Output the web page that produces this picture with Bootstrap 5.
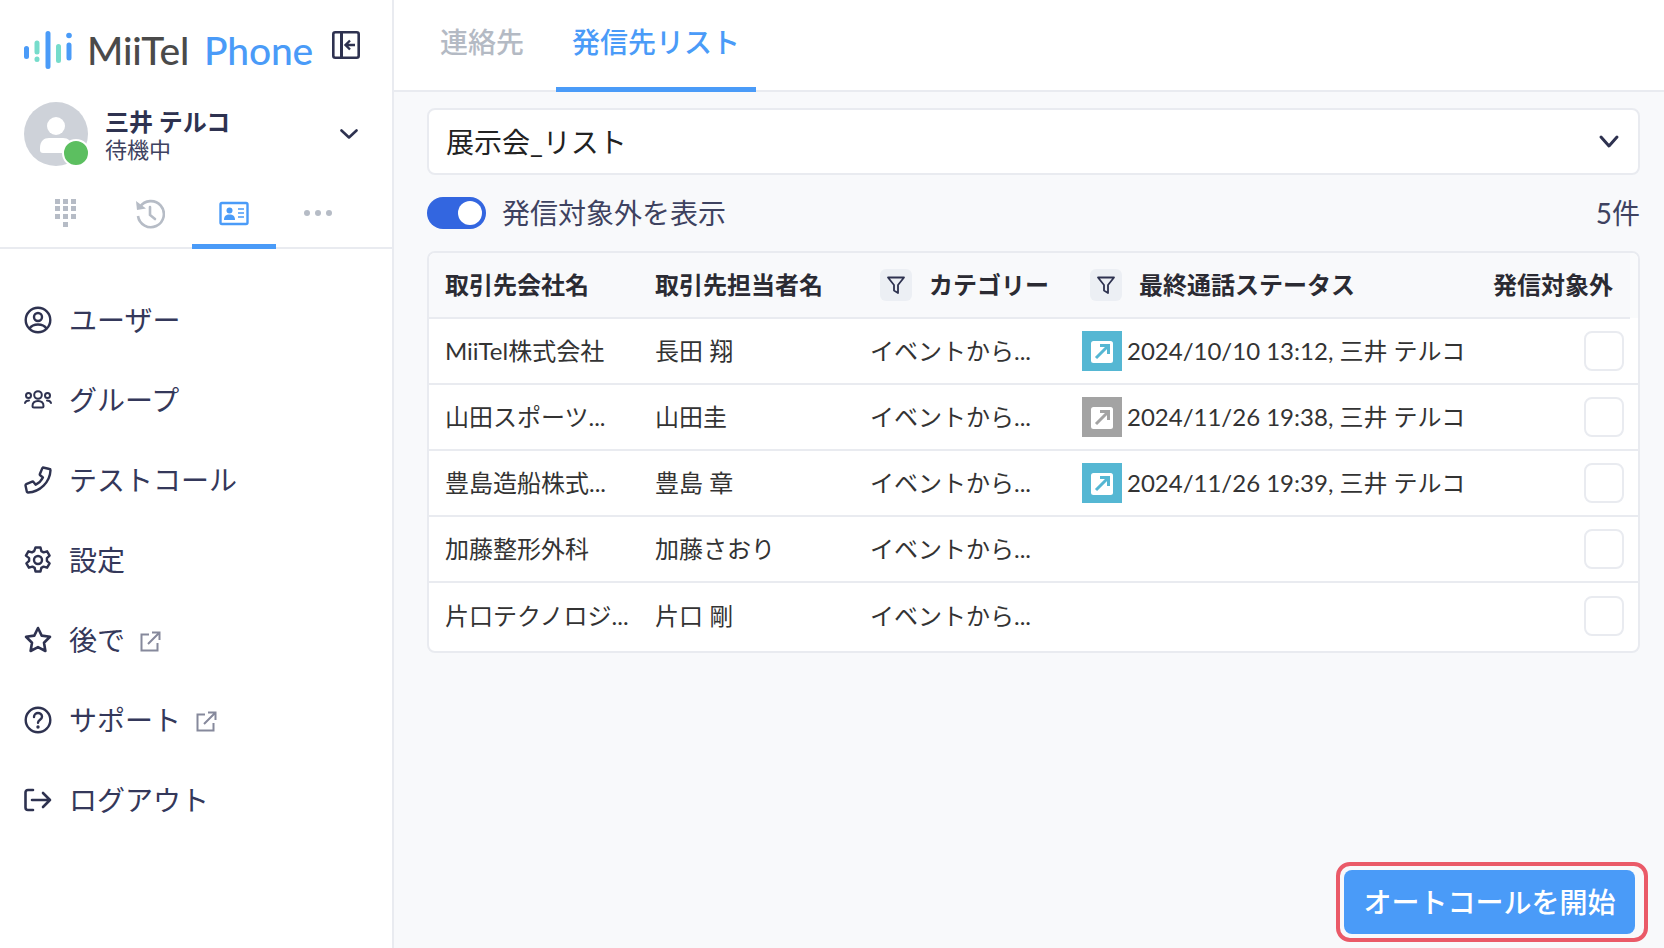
<!DOCTYPE html>
<html lang="ja">
<head>
<meta charset="utf-8">
<title>MiiTel Phone</title>
<link href="https://cdn.jsdelivr.net/npm/bootstrap@5.3.0/dist/css/bootstrap.min.css" rel="stylesheet">
<style>
html,body{height:100%;overflow:hidden}
body{font-family:Lato,"Noto Sans CJK JP",sans-serif;color:#2e3250;background:#fff}
.shell{height:948px}
.side{width:394px;flex:none;border-right:2px solid #e9ebf0;background:#fff}
.brandrow{height:102px;padding:31px 32px 0 24px}
.brandmark{width:48px;height:38px;flex:none}
.brandname{font-family:Lato,sans-serif;font-size:39px;line-height:38px;font-weight:500;margin-left:15px;letter-spacing:-.2px;white-space:nowrap}
.brand-a{color:#4a4a4a}
.brand-b{color:#4a9bf8;margin-left:15px}
.collapse-ic{width:28px;height:28px;margin-left:auto}
.userrow{padding:0 34px 0 24px;height:64px}
.avatarbox{width:64px;height:64px;border-radius:50%;background:#ced2d9;flex:none;position:relative}
.statusdot{position:absolute;right:-2px;bottom:-1px;width:28px;height:28px;border-radius:50%;background:#5cbf60;border:2px solid #fff}
.username{font-size:24px;line-height:30px;font-weight:700;color:#2e3250;white-space:nowrap}
.userstate{font-size:22px;line-height:26px;color:#3e4260;white-space:nowrap}
.usertext{margin-left:17px;margin-top:2px}
.chev{width:18px;height:10px;margin-left:auto}
.icontabs{padding:0 24px;height:83px;margin-top:0;border-bottom:2px solid #e9ebf0}
.icontab{width:84px;height:81px;padding-top:33px;text-align:center;border-bottom:5px solid transparent;margin-bottom:-2px;height:83px}
.icontab.on{border-bottom-color:#4a9bf8}
.icontab svg{display:block;margin:0 auto}
.menulist{padding-top:31px}
.menuitem{height:80px;padding-left:24px;color:#34385a;font-size:28px;text-decoration:none;gap:17px}
.menuitem>svg:first-child{width:28px;height:28px;flex:none}
.extlink{width:21px;height:21px;margin-left:-2px;margin-top:2px;flex:none}
.pane{background:#f8f9fb;min-width:0}
.tabbar{height:92px;background:#fff;border-bottom:2px solid #e9ebf0;padding-left:16px}
.tabitem{height:90px;padding:0 16px;font-size:28px;font-weight:500;line-height:85px;color:#b4bac4;text-decoration:none;white-space:nowrap;margin-bottom:-2px;border-bottom:5px solid transparent;height:92px}
.tabitem.first{padding:0 16px 0 30px;margin-right:16px}
.tabitem.on{color:#4a9bf8;border-bottom-color:#4a9bf8}
.panebody{padding:16px 24px 0 33px}
.listpick.form-select{height:67px;border:2px solid #e9ebf0;border-radius:8px;font-size:28px;color:#222;padding:0 60px 0 17px;background-position:right 16px center;background-size:26px 20px;background-image:url("data:image/svg+xml,%3csvg xmlns='http://www.w3.org/2000/svg' viewBox='0 0 26 20'%3e%3cpath fill='none' stroke='%232e3250' stroke-linecap='round' stroke-linejoin='round' stroke-width='3' d='M5 5l8 9 8-9'/%3e%3c/svg%3e")}
.togglerow{height:76px}
.togglebox.form-check{padding:0;margin:0;min-height:0}
.togglebox .form-check-input{width:59px;height:32px;margin:0;float:none;background-color:#3366e0;border:0;box-shadow:none}
.togglelabel{font-size:28px;color:#3e4260;margin-left:16px;line-height:32px}
.countlabel{font-size:28px;color:#3e4260;margin-left:auto}
.gridwrap{border:2px solid #e9ebf0;border-radius:8px;background:#fff;overflow:hidden;height:402px}
.gridtable.table{table-layout:fixed;width:100%;margin:0;font-size:24px;color:#333;--bs-table-bg:transparent;border-color:#e9ebf0}
.gridtable th,.gridtable td{padding:0 0 0 16px;vertical-align:middle;white-space:nowrap;border-bottom:2px solid #e9ebf0;box-shadow:none}
.gridtable thead tr{height:65px}
.gridtable tbody tr{height:66px}
.gridtable tbody tr:last-child td{border-bottom:0;height:66px}
.gridtable th{background:#f8f9fb;font-weight:700;color:#2b2b33;font-size:24px}
.gridtable th.spacer{background:#fafbfc;border-bottom:0;padding:0}
.gridtable th.endhead{text-align:right;padding-right:17px}
.gridtable td.endcell{text-align:right;padding-right:14px}
.filterbtn{width:32px;height:32px;border-radius:6px;background:#eceff4;flex:none}
.filtercell{margin-left:10px;gap:17px}
.filtercell.wide{margin-left:8px;gap:17px}
.statusic{width:40px;height:40px;flex:none;margin-right:5px}
.mark-blue{background:#55b7d3}
.mark-grey{background:#a3a3a3}
.tick{display:inline-block;width:40px;height:40px;border:2px solid #e9ebf0;border-radius:8px;background:#fff;vertical-align:middle}
.bottombar{position:absolute;right:16px;bottom:6px;border:4px solid #ea5a68;border-radius:14px;padding:4px 9px 4px 4px}
.autocall.btn{width:291px;height:64px;background:#4a9bf8;border:0;border-radius:8px;font-size:28px;font-weight:500;color:#fff;padding:0;white-space:nowrap}
.pane{position:relative}
</style>
</head>
<body>
<div class="shell d-flex">
  <aside class="side d-flex flex-column">
    <div class="brandrow d-flex align-items-start">
      <svg class="brandmark" viewBox="0 0 48 38" fill="none" stroke-linecap="round" stroke-width="5">
        <path stroke="#4a9bf8" d="M2.5 17.5v8M24 2.5v33M45 14v13"/>
        <path stroke="#76dccb" d="M13 12v9M13 28v.5M34.500 15.500v14"/>
        <circle cx="45" cy="4.500" r="2.800" fill="#4a9bf8"/>
      </svg>
      <div class="brandname"><span class="brand-a">MiiTel</span><span class="brand-b">Phone</span></div>
      <svg class="collapse-ic" viewBox="0 0 28 28" fill="none" stroke="#2e3250" stroke-width="2.600"><rect x="1.300" y="1.300" width="25.400" height="25.400" rx="2"/><path d="M9.500 1.300v25.400" stroke-width="3"/><path d="M23 14h-9M18 9.500L13.500 14l4.500 4.500" stroke-width="2.400"/></svg>
    </div>
    <div class="userrow d-flex align-items-center">
      <div class="avatarbox">
        <svg width="64" height="64" viewBox="0 0 64 64" fill="#fff"><circle cx="32" cy="24" r="9"/><path d="M16 46c0-7 4-10 9-10h14c5 0 9 3 9 10v2c0 2-1 3-3 3H19c-2 0-3-1-3-3z"/></svg>
        <span class="statusdot"></span>
      </div>
      <div class="usertext"><div class="username">三井 テルコ</div><div class="userstate">待機中</div></div>
      <svg class="chev" viewBox="0 0 18 10" fill="none" stroke="#2e3250" stroke-width="2.600" stroke-linecap="round" stroke-linejoin="round"><path d="M1.500 1.500L9 8.500l7.500-7"/></svg>
    </div>
    <div class="icontabs d-flex">
      <div class="icontab">
        <svg width="24" height="30" viewBox="0 0 24 30" fill="#b6bcc6"><rect x="1" y="0" width="5" height="5"/><rect x="9" y="0" width="5" height="5"/><rect x="17" y="0" width="5" height="5"/><rect x="1" y="7" width="5" height="5"/><rect x="9" y="7" width="5" height="5"/><rect x="17" y="7" width="5" height="5"/><rect x="1" y="15" width="5" height="5"/><rect x="9" y="15" width="5" height="5"/><rect x="17" y="15" width="5" height="5"/><rect x="9" y="23" width="5" height="5"/></svg>
      </div>
      <div class="icontab">
        <svg width="30" height="30" viewBox="0 0 30 30" fill="none" stroke="#b6bcc6" stroke-width="2.600"><path d="M5 8A13 13 0 1 1 3 17"/><path d="M1 2l1 9 9-1.500z" fill="#b6bcc6" stroke="none"/><path d="M15 8v8l5 4" stroke-linecap="round"/></svg>
      </div>
      <div class="icontab on">
        <svg width="30" height="30" viewBox="0 0 30 30" fill="none"><rect x="1.500" y="4" width="27" height="21" rx="1.500" stroke="#4a9bf8" stroke-width="2.400"/><circle cx="10.500" cy="11.500" r="3" fill="#4a9bf8"/><path d="M5 21c0-4 2-5.500 5.500-5.500S16 17 16 21z" fill="#4a9bf8"/><path d="M19 10h6M19 14h6M19 18h6" stroke="#4a9bf8" stroke-width="1.600"/></svg>
      </div>
      <div class="icontab">
        <svg width="30" height="30" viewBox="0 0 30 30" fill="#b6bcc6"><circle cx="4" cy="14" r="3"/><circle cx="15" cy="14" r="3"/><circle cx="26" cy="14" r="3"/></svg>
      </div>
    </div>
    <nav class="menulist nav flex-column">
      <a class="menuitem d-flex align-items-center" href="#">
        <svg viewBox="0 0 28 28" fill="none" stroke="#2e3250" stroke-width="2.400"><circle cx="14" cy="14" r="12.300"/><circle cx="14" cy="11" r="4"/><path d="M5.500 22.500c2-3 5-4 8.500-4s6.500 1 8.500 4"/></svg>
        <span>ユーザー</span>
      </a>
      <a class="menuitem d-flex align-items-center" href="#">
        <svg viewBox="0 0 28 28" fill="none" stroke="#2e3250" stroke-width="2"><circle cx="14" cy="9" r="3.800"/><circle cx="4.500" cy="9.500" r="2.500"/><circle cx="23.500" cy="9.500" r="2.500"/><path d="M8.500 20c0-4 2-5 5.500-5s5.500 1 5.500 5c0 1-.5 1.500-1.500 1.500H10c-1 0-1.500-.5-1.500-1.500z"/><path d="M1 17c.5-1.500 2-2.500 4-2.500M27 17c-.5-1.500-2-2.500-4-2.500" stroke-linecap="round"/></svg>
        <span>グループ</span>
      </a>
      <a class="menuitem d-flex align-items-center" href="#">
        <svg viewBox="0 0 28 28" fill="none" stroke="#2e3250" stroke-width="2.400" stroke-linejoin="round"><path d="M19 1.500l6.500 1.500c.5 0 1 .5 1 1.200C26 16 16 26 4 26.500c-.7 0-1.200-.5-1.200-1L1.500 19.500c0-.5 0-1 .7-1.300l6-2.500c.5-.2 1-.1 1.300.3l2.200 2.700c3.500-1.700 5.500-3.700 7.200-7.200l-2.700-2.200c-.4-.3-.5-.8-.3-1.300l2.500-6c.3-.5.8-.7 1.300-.5z"/></svg>
        <span>テストコール</span>
      </a>
      <a class="menuitem d-flex align-items-center" href="#">
        <svg viewBox="0 0 28 28" fill="none" stroke="#2e3250" stroke-width="2.400" stroke-linejoin="round"><circle cx="14" cy="14" r="4"/><path d="M11.500 1.500h5l.8 3.600 2.300 1.300 3.500-1.100 2.500 4.300-2.700 2.500v2.800l2.700 2.500-2.500 4.300-3.500-1.100-2.300 1.300-.8 3.600h-5l-.8-3.600-2.300-1.300-3.500 1.100-2.500-4.300 2.700-2.500v-2.800L1.900 9.600l2.500-4.300 3.500 1.100 2.300-1.300z"/></svg>
        <span>設定</span>
      </a>
      <a class="menuitem d-flex align-items-center" href="#">
        <svg viewBox="0 0 28 28" fill="none" stroke="#2e3250" stroke-width="2.600" stroke-linejoin="round"><path d="M14 2l3.700 7.600 8.300 1.200-6 5.900 1.400 8.300-7.400-3.900-7.400 3.900L8 16.700l-6-5.900 8.300-1.200z"/></svg>
        <span>後で</span>
        <svg class="extlink" viewBox="0 0 21 21" fill="none" stroke="#86899c" stroke-width="2"><path d="M9 3.500H1.500v16h16V12"/><path d="M8 13L19 2M12 1.500h7.500V9"/></svg>
      </a>
      <a class="menuitem d-flex align-items-center" href="#">
        <svg viewBox="0 0 28 28" fill="none" stroke="#2e3250" stroke-width="2.400"><circle cx="14" cy="14" r="12.300"/><path d="M10 11c0-2.500 2-4 4-4s4 1.500 4 3.700c0 3-4 3-4 6" stroke-linecap="round"/><circle cx="14" cy="21" r="1.700" fill="#2e3250" stroke="none"/></svg>
        <span>サポート</span>
        <svg class="extlink" viewBox="0 0 21 21" fill="none" stroke="#86899c" stroke-width="2"><path d="M9 3.500H1.500v16h16V12"/><path d="M8 13L19 2M12 1.500h7.500V9"/></svg>
      </a>
      <a class="menuitem d-flex align-items-center" href="#">
        <svg viewBox="0 0 28 28" fill="none" stroke="#2e3250" stroke-width="2.600" stroke-linecap="round" stroke-linejoin="round"><path d="M9 4H4C2.500 4 1.500 5 1.500 6.500v15C1.500 23 2.500 24 4 24h5"/><path d="M8 14h18M19 7l7 7-7 7"/></svg>
        <span>ログアウト</span>
      </a>
    </nav>
  </aside>
  <main class="pane flex-grow-1 d-flex flex-column">
    <div class="tabbar d-flex">
      <a class="tabitem first" href="#">連絡先</a>
      <a class="tabitem on" href="#">発信先リスト</a>
    </div>
    <div class="panebody">
      <select class="listpick form-select"><option>展示会_リスト</option></select>
      <div class="togglerow d-flex align-items-center">
        <div class="togglebox form-check form-switch d-flex align-items-center">
          <input class="form-check-input" type="checkbox" role="switch" id="sw" checked>
          <label class="togglelabel" for="sw">発信対象外を表示</label>
        </div>
        <span class="countlabel">5件</span>
      </div>
      <div class="gridwrap">
        <table class="gridtable table">
          <colgroup><col style="width:210px"><col style="width:215px"><col style="width:212px"><col style="width:404px"><col style="width:160px"><col style="width:8px"></colgroup>
          <thead>
            <tr>
              <th>取引先会社名</th>
              <th>取引先担当者名</th>
              <th><div class="filtercell d-flex align-items-center"><span class="filterbtn d-flex align-items-center justify-content-center"><svg width="20" height="20" viewBox="0 0 20 20" fill="none" stroke="#2e3250" stroke-width="1.800" stroke-linejoin="round"><path d="M2 2.500h16l-6 7.500v8l-4-2.500V10z"/></svg></span><span>カテゴリー</span></div></th>
              <th><div class="filtercell wide d-flex align-items-center"><span class="filterbtn d-flex align-items-center justify-content-center"><svg width="20" height="20" viewBox="0 0 20 20" fill="none" stroke="#2e3250" stroke-width="1.800" stroke-linejoin="round"><path d="M2 2.500h16l-6 7.500v8l-4-2.500V10z"/></svg></span><span>最終通話ステータス</span></div></th>
              <th class="endhead">発信対象外</th>
              <th class="spacer"></th>
            </tr>
          </thead>
          <tbody>
            <tr><td>MiiTel株式会社</td><td>長田 翔</td><td>イベントから...</td><td><div class="d-flex align-items-center"><svg class="statusic mark-blue" viewBox="0 0 40 40"><rect x="9" y="10" width="22" height="22" rx="2.500" fill="#fff"/><path d="M14 27l11-11M18 14.500h8.500V23" fill="none" stroke="#55b7d3" stroke-width="3"/></svg>2024/10/10 13:12, 三井 テルコ</div></td><td class="endcell" colspan="2"><span class="tick"></span></td></tr>
            <tr><td>山田スポーツ...</td><td>山田圭</td><td>イベントから...</td><td><div class="d-flex align-items-center"><svg class="statusic mark-grey" viewBox="0 0 40 40"><rect x="9" y="10" width="22" height="22" rx="2.500" fill="#fff"/><path d="M14 27l11-11M18 14.500h8.500V23" fill="none" stroke="#a3a3a3" stroke-width="3"/></svg>2024/11/26 19:38, 三井 テルコ</div></td><td class="endcell" colspan="2"><span class="tick"></span></td></tr>
            <tr><td>豊島造船株式...</td><td>豊島 章</td><td>イベントから...</td><td><div class="d-flex align-items-center"><svg class="statusic mark-blue" viewBox="0 0 40 40"><rect x="9" y="10" width="22" height="22" rx="2.500" fill="#fff"/><path d="M14 27l11-11M18 14.500h8.500V23" fill="none" stroke="#55b7d3" stroke-width="3"/></svg>2024/11/26 19:39, 三井 テルコ</div></td><td class="endcell" colspan="2"><span class="tick"></span></td></tr>
            <tr><td>加藤整形外科</td><td>加藤さおり</td><td>イベントから...</td><td></td><td class="endcell" colspan="2"><span class="tick"></span></td></tr>
            <tr><td>片口テクノロジ...</td><td>片口 剛</td><td>イベントから...</td><td></td><td class="endcell" colspan="2"><span class="tick"></span></td></tr>
          </tbody>
        </table>
      </div>
    </div>
    <div class="bottombar"><button class="autocall btn" type="button">オートコールを開始</button></div>
  </main>
</div>
<script src="https://cdn.jsdelivr.net/npm/bootstrap@5.3.0/dist/js/bootstrap.bundle.min.js"></script>
</body>
</html>
